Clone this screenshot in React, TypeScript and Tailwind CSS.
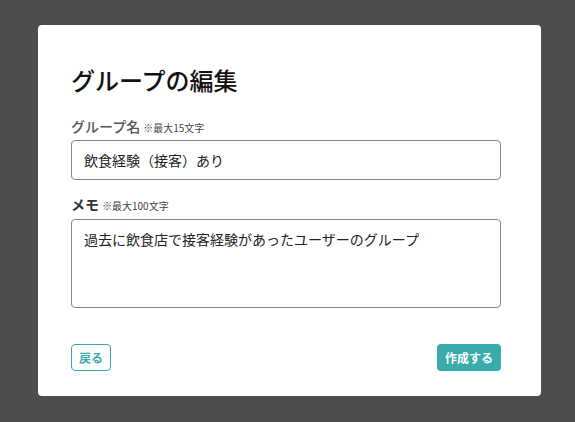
export default function App() {
    return (
        <div className="w-[575px] h-[422px] bg-[#4d4d4d] pt-[25px] pl-[38px]" style={{ fontFamily: '"Noto Sans CJK JP", "Noto Sans", sans-serif' }}>
            <div className="w-[503px] h-[371px] bg-white rounded-[4px] pl-[33px] pr-[40px] pt-[37px] flex flex-col">
                <h1 className="text-[24px] leading-[36px] font-medium text-[#111]">グループの編集</h1>

                <div className="mt-[18px] flex items-baseline gap-[3px] h-[20px]">
                    <span className="text-[14px] font-medium text-[#555]">グループ名</span>
                    <span className="text-[10px] text-[#444]">※最大15文字</span>
                </div>
                <div className="mt-[4px] h-[40px] border border-[#888] rounded-[4px] px-[12px] flex items-center text-[14px] text-[#222]">
                    飲食経験（接客）あり
                </div>

                <div className="mt-[14px] flex items-baseline gap-[3px] h-[20px]">
                    <span className="text-[14px] font-bold text-[#333]">メモ</span>
                    <span className="text-[10px] text-[#444]">※最大100文字</span>
                </div>
                <div className="mt-[5px] h-[89px] border border-[#888] rounded-[4px] px-[12px] pt-[9px] text-[14px] leading-[20px] text-[#222]">
                    過去に飲食店で接客経験があったユーザーのグループ
                </div>

                <div className="mt-[36px] flex justify-between">
                    <button className="w-[40px] h-[27px] border border-[#3aabad] rounded-[4px] text-[12px] font-bold text-[#3aabad] flex items-center justify-center">
                        戻る
                    </button>
                    <button className="w-[64px] h-[27px] bg-[#3aabad] rounded-[4px] text-[12px] font-bold text-white flex items-center justify-center">
                        作成する
                    </button>
                </div>
            </div>
        </div>
    );
}
